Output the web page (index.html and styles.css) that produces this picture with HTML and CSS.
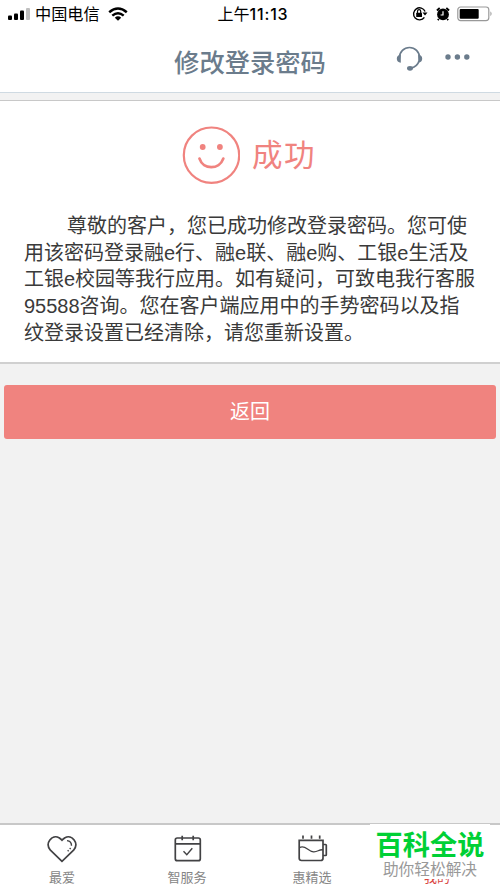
FILE: index.html
```html
<!DOCTYPE html>
<html lang="zh-CN">
<head>
<meta charset="utf-8">
<title>修改登录密码</title>
<link rel="stylesheet" href="styles.css">
</head>
<body>
<div class="status">
  <div class="carrier">
    <svg width="23" height="14" viewBox="0 0 23 14"><rect x="0" y="8.500" width="4" height="4.500" rx="1"/><rect x="6" y="6.500" width="4" height="6.500" rx="1"/><rect x="12" y="3.500" width="4" height="9.500" rx="1"/><rect x="18" y="1" width="4" height="12" rx="1" fill="#bfbfbf"/></svg>
    <span class="carrier-name">中国电信</span>
    <svg width="20" height="14" viewBox="0 0 20 14"><g fill="none" stroke="#000" stroke-width="2.500"><path d="M1.200 5.200Q10 -2.200 18.800 5.200M4.300 8.600Q10 3.800 15.700 8.600"/></g><path d="M6.800 10.700Q10 8 13.200 10.700L10 13.700Z"/></svg>
  </div>
  <div class="time">上午<span class="digits">11:13</span></div>
  <div class="indicators">
    <svg width="16" height="16" viewBox="0 0 16 16"><path d="M13.100 5.500A6 6 0 1 0 12.400 11.400" fill="none" stroke="#000" stroke-width="1.400"/><path d="M10.500 6.500H15.500L13 9.500Z"/><rect x="4.200" y="6.800" width="5.800" height="4.300" rx=".5"/><path d="M5.500 7V5.300a1.600 1.600 0 0 1 3.200 0V7" fill="none" stroke="#000" stroke-width="1.200"/></svg>
    <svg class="alarm" width="14" height="14" viewBox="0 0 14 14"><circle cx="7" cy="7.400" r="5.900"/><path d="M.9 3.500 3.700 1M10.300 1l2.800 2.500M2.800 12 1.800 13.200M11.200 12l1 1.200" stroke="#000" stroke-width="1.800"/><path d="M7 4.200v3.800H4.600" fill="none" stroke="#fff" stroke-width="1.200"/></svg>
    <svg class="battery" width="36" height="16" viewBox="0 0 36 16"><rect x=".8" y="1" width="31" height="13.600" rx="2.800" fill="#fff" stroke="#999" stroke-width="1.200"/><rect x="2.700" y="3" width="19" height="9.800" rx="1"/><path d="M33.500 5.300q2 2.500 0 5Z" fill="#888"/></svg>
  </div>
</div>
<header class="header">
  <h1 class="title">修改登录密码</h1>
  <div class="actions">
    <svg width="27" height="26" viewBox="0 0 27 26"><path d="M3.500 12.500v-1a10 10 0 0 1 20 0v1M23 15q-1.600 5.800-8.500 7.200" fill="none" stroke="#6b7c8c" stroke-width="1.700"/><path d="M4.800 8.500v8.300Q.8 16.200 .8 12.700T4.800 8.500ZM22.200 8.500v8.300q4-.6 4-4.100t-4-4.200Z" fill="#6b7c8c"/><ellipse cx="14" cy="22.300" rx="3" ry="2.400" fill="#6b7c8c"/></svg>
    <svg class="more" width="25" height="6" viewBox="0 0 25 6" fill="#6b7c8c"><circle cx="3" cy="3" r="2.700"/><circle cx="12.400" cy="3" r="2.700"/><circle cx="21.800" cy="3" r="2.700"/></svg>
  </div>
</header>
<main class="content">
  <section class="result">
    <div class="success">
      <svg width="58" height="58" viewBox="0 0 58 58"><circle cx="29.500" cy="29.200" r="27.700" fill="none" stroke="#f0837f" stroke-width="2.200"/><circle cx="20.700" cy="21" r="2.900" fill="#f0837f"/><circle cx="37.900" cy="21" r="2.900" fill="#f0837f"/><path d="M17.500 32.600C21.200 44 37.200 44 41.300 32.600" fill="none" stroke="#f0837f" stroke-width="2.800" stroke-linecap="round"/></svg>
      <span class="success-text">成功</span>
    </div>
    <p class="message"><span class="line first">尊敬的客户，您已成功修改登录密码。您可使</span><span class="line">用该密码登录融e行、融e联、融e购、工银e生活及</span><span class="line">工银e校园等我行应用。如有疑问，可致电我行客服</span><span class="line">95588咨询。您在客户端应用中的手势密码以及指</span><span class="line">纹登录设置已经清除，请您重新设置。</span></p>
  </section>
  <button class="back">返回</button>
</main>
<nav class="tabs">
  <div class="tab">
    <svg width="32" height="30" viewBox="0 0 32 30" fill="none" stroke="#424244" stroke-width="1.700"><path d="M16 27.300 4.400 16.200C-1.500 9 6 .2 13 3.700Q15 5 16 6.200 17 5 19 3.700C26 .2 33.500 9 27.600 16.200Z"/><path d="M21 6.600q4.600.4 4.500 5.200M24.600 14l-.8 1.200M22.600 16.300l-.9 1" stroke-width="1.400"/></svg>
    <span>最爱</span>
  </div>
  <div class="tab">
    <svg width="32" height="30" viewBox="0 0 32 30" fill="none" stroke="#424244" stroke-width="1.700"><rect x="4.300" y="4" width="25" height="22.700" rx="2"/><path d="M4.300 9.800h25M11.200 1.700v4.500M22.200 1.700v4.500"/><path d="m12.500 17.300 3.300 3.500 5.500-6.500" stroke-width="1.400"/></svg>
    <span>智服务</span>
  </div>
  <div class="tab">
    <svg width="32" height="30" viewBox="0 0 32 30" fill="none" stroke="#424244" stroke-width="1.700"><path d="M3.200 6.400h23.800v17.800q0 2.300-2.300 2.300H5.500q-2.300 0-2.300-2.300ZM27 10.500h2.500q.8 0 .8.800v9.400q0 .8-.8.800h-2.500M7 1.400v3.300M15.500 1.400v3.300M23.700 1.400v3.300"/><path d="M3.500 13.600c6-3.300 8 3.800 14 4.200 4.500.3 5-2.500 9.500-2" stroke-width="1.300"/></svg>
    <span>惠精选</span>
  </div>
  <div class="tab active">
    <svg width="32" height="30" viewBox="0 0 32 30" fill="none" stroke="#d9443f"><circle cx="16" cy="9" r="6"/></svg>
    <span>我的</span>
  </div>
  <div class="brand"><strong>百科全说</strong><small>助你轻松解决</small></div>
</nav>
</body>
</html>
```
FILE: styles.css
```css
* { box-sizing: border-box; }
body {
  margin: 0;
  height: 889px;
  display: flex;
  flex-direction: column;
  overflow: hidden;
  background: #f2f2f2;
  color: #3a3a3a;
  font-family: "Liberation Sans", "Noto Sans CJK SC", sans-serif;
}
svg { display: block; flex: none; }
.status {
  flex: none;
  height: 28px;
  padding: 0 7px 0 8px;
  display: grid;
  grid-template-columns: 1fr auto 1fr;
  align-items: center;
  background: #fff;
  color: #000;
}
.carrier { display: flex; align-items: center; height: 28px; }
.carrier-name { margin: 0 8px 0 4px; font-size: 16.2px; line-height: 28px; }
.time { font-family: Inter, "Noto Sans CJK SC", sans-serif; font-size: 16px; line-height: 28px; font-weight: 400; margin-left: 5px; }
.digits { letter-spacing: 0.8px; font-weight: 500; }
.indicators { display: flex; align-items: center; justify-content: flex-end; }
.alarm { margin: 0 7px 0 8px; }
.header {
  flex: none;
  height: 65px;
  display: grid;
  grid-template-columns: 1fr auto 1fr;
  background: #fff;
  border-bottom: 1px solid #cfdae2;
}
.title { grid-column: 2; margin: 0; font-size: 25.3px; line-height: 70px; height: 64px; font-weight: 500; color: #6b7c8c; }
.actions { display: flex; align-items: flex-start; padding: 18px 0 0 70px; }
.more { margin: 8px 0 0 22px; }
.content { flex: 1; padding-top: 7px; }
.result {
  height: 264px;
  padding: 25px 24px 0;
  background: #fff;
  border-top: 1px solid #c8c8c8;
  border-bottom: 2px solid #d0d0d0;
}
.success { display: flex; align-items: center; height: 58px; padding-left: 158px; }
.success-text { margin-left: 12px; font-size: 30.5px; letter-spacing: 1.5px; line-height: 58px; color: #f0837f; }
.message { margin: 29px 0 0; font-size: 20px; line-height: 26.7px; white-space: nowrap; }
.line { display: block; }
.first { padding-left: 43px; }
.back {
  display: block;
  width: 492px;
  height: 54px;
  margin: 21px 4px 0;
  padding: 0;
  border: 0;
  border-radius: 3px;
  background: #f0837f;
  color: #fff;
  font: 20px/54px "Liberation Sans", "Noto Sans CJK SC", sans-serif;
}
.tabs {
  position: relative;
  flex: none;
  height: 66px;
  display: grid;
  grid-template-columns: repeat(4, 1fr);
  background: #fff;
  border-top: 2px solid #c8c8c8;
}
.tab { display: flex; flex-direction: column; align-items: center; padding: 9px 1px 0 0; font-size: 13px; line-height: 20px; color: #858585; }
.tab span { margin-top: 4px; }
.active { color: #d9443f; }
.brand {
  position: absolute;
  left: 370px;
  top: -1px;
  width: 120px;
  height: 55px;
  display: flex;
  flex-direction: column;
  align-items: center;
  background: #fff;
  white-space: nowrap;
}
.brand strong { margin-top: 5px; font-size: 27.2px; line-height: 34px; font-weight: 700; color: #00d035; }
.brand small { font-size: 15.7px; line-height: 13px; color: #999; }
```
